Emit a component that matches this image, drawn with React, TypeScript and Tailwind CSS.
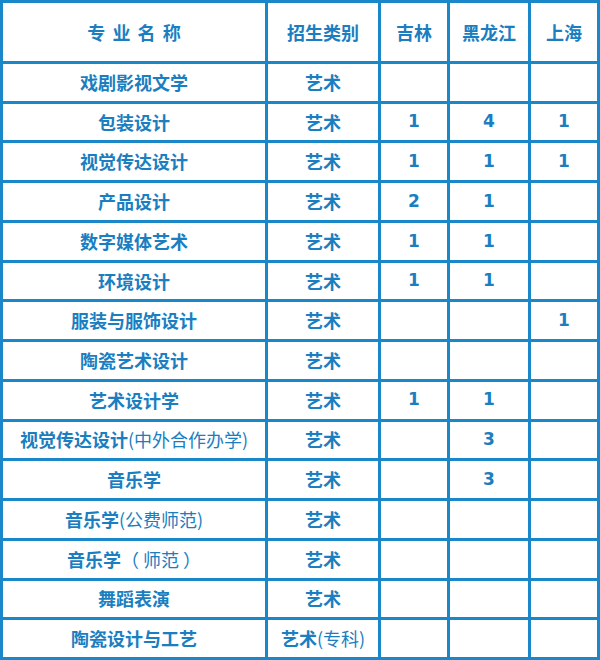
const ROWS: { name: string; extra?: string; type: string; typeExtra?: string; jl?: string; hlj?: string; sh?: string }[] = [
  { name: '戏剧影视文学', type: '艺术' },
  { name: '包装设计', type: '艺术', jl: '1', hlj: '4', sh: '1' },
  { name: '视觉传达设计', type: '艺术', jl: '1', hlj: '1', sh: '1' },
  { name: '产品设计', type: '艺术', jl: '2', hlj: '1' },
  { name: '数字媒体艺术', type: '艺术', jl: '1', hlj: '1' },
  { name: '环境设计', type: '艺术', jl: '1', hlj: '1' },
  { name: '服装与服饰设计', type: '艺术', sh: '1' },
  { name: '陶瓷艺术设计', type: '艺术' },
  { name: '艺术设计学', type: '艺术', jl: '1', hlj: '1' },
  { name: '视觉传达设计', extra: '(中外合作办学)', type: '艺术', hlj: '3' },
  { name: '音乐学', type: '艺术', hlj: '3' },
  { name: '音乐学', extra: '(公费师范)', type: '艺术' },
  { name: '音乐学', extra: '（ 师范 ）', type: '艺术' },
  { name: '舞蹈表演', type: '艺术' },
  { name: '陶瓷设计与工艺', type: '艺术', typeExtra: '(专科)' },
];

function Cell({ children }: { children?: React.ReactNode }) {
  return (
    <div className="bg-white flex items-center justify-center whitespace-nowrap">
      {children}
    </div>
  );
}

// numbers in the count columns
function Num({ v }: { v?: string }) {
  return (
    <Cell>
      {v && <span className="text-[17px]" style={{ fontFamily: '"DejaVu Sans", sans-serif' }}>{v}</span>}
    </Cell>
  );
}

export default function App() {
  return (
    <div
      className="w-[600px] h-[660px] bg-[#1a87c8] p-[3px] grid gap-[3px] grid-cols-[262px_110px_66px_78px_66px] grid-rows-[58px_repeat(15,1fr)] text-[18px] font-bold text-[#1a7ec0]"
      style={{ fontFamily: '"Noto Sans CJK SC", "Noto Sans", sans-serif' }}
    >
      <Cell>
        <span className="tracking-[0.4em] pl-[0.4em]">专业名称</span>
      </Cell>
      <Cell>招生类别</Cell>
      <Cell>吉林</Cell>
      <Cell>黑龙江</Cell>
      <Cell>上海</Cell>
      {ROWS.map((r, i) => (
        <div key={i} className="contents">
          <Cell>
            {r.name}
            {r.extra && <span className="font-normal">{r.extra}</span>}
          </Cell>
          <Cell>
            {r.type}
            {r.typeExtra && <span className="font-normal">{r.typeExtra}</span>}
          </Cell>
          <Num v={r.jl} />
          <Num v={r.hlj} />
          <Num v={r.sh} />
        </div>
      ))}
    </div>
  );
}
